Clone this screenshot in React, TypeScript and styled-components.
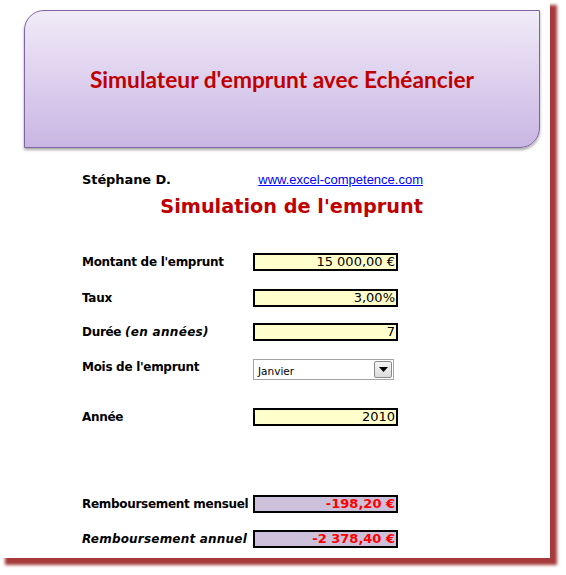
import { FC } from 'react';
import styled, { createGlobalStyle } from 'styled-components';

const GlobalStyle = createGlobalStyle`
  html, body {
    margin: 0;
    padding: 0;
    background: #ffffff;
  }
`;

interface IField {
  label: string;
  italic?: string;
  italicLabel?: boolean;
  value: string;
  kind: 'input' | 'select' | 'result';
  gap: number;
}

const fields: IField[] = [
  { label: "Montant de l'emprunt", value: '15 000,00 €', kind: 'input', gap: 35 },
  { label: 'Taux', value: '3,00%', kind: 'input', gap: 18 },
  { label: 'Durée ', italic: '(en années)', value: '7', kind: 'input', gap: 16 },
  { label: "Mois de l'emprunt", value: 'Janvier', kind: 'select', gap: 18 },
  { label: 'Année', value: '2010', kind: 'input', gap: 28 },
  { label: 'Remboursement mensuel', value: '-198,20 €', kind: 'result', gap: 69 },
  {
    label: 'Remboursement annuel',
    italicLabel: true,
    value: '-2 378,40 €',
    kind: 'result',
    gap: 17
  }
];

const App: FC = () => {
  return (
    <>
      <GlobalStyle />
      <Page>
        <Sheet>
          <Banner>
            <BannerTitle>Simulateur d'emprunt avec Echéancier</BannerTitle>
          </Banner>

          <Content>
            <InfoRow>
              <Author>Stéphane D.</Author>
              <SiteLink href="#">www.excel-competence.com</SiteLink>
            </InfoRow>
            <Heading>Simulation de l'emprunt</Heading>

            {fields.map((field) => (
              <FieldRow key={field.label} $gap={field.gap}>
                <Label $italic={field.italicLabel} $top={field.kind === 'select'}>
                  {field.label}
                  {field.italic && <em>{field.italic}</em>}
                </Label>
                {field.kind === 'select' ? (
                  <Select>
                    <SelectText>{field.value}</SelectText>
                    <DropButton>
                      <svg width="9" height="5" viewBox="0 0 9 5">
                        <path d="M0 0 L9 0 L4.5 5 Z" fill="#000" />
                      </svg>
                    </DropButton>
                  </Select>
                ) : (
                  <Cell $result={field.kind === 'result'}>{field.value}</Cell>
                )}
              </FieldRow>
            ))}
          </Content>
        </Sheet>
      </Page>
    </>
  );
};

const Page = styled.div`
  width: 566px;
  height: 575px;
  overflow: hidden;
`;

const Sheet = styled.div`
  width: 550px;
  height: 558px;
  background: #ffffff;
  box-shadow: 6px 6px 3px 1px #a63a3a;
  box-sizing: border-box;
  padding-top: 10px;
  overflow: hidden;
`;

const Banner = styled.div`
  margin-left: 24px;
  width: 516px;
  height: 138px;
  box-sizing: border-box;
  border: 1px solid #8064a2;
  border-radius: 20px 0 20px 0;
  background: linear-gradient(180deg, #f1ebf8 0%, #ddd0ee 50%, #c9b6e3 100%);
  box-shadow: 0 2px 3px rgba(0, 0, 0, 0.35);
  display: flex;
  align-items: center;
  justify-content: center;
`;

const BannerTitle = styled.h1`
  margin: 0;
  font-family: Lato, 'Noto Sans', sans-serif;
  font-weight: 700;
  font-size: 22.7px;
  color: #c00000;
`;

const Content = styled.div`
  margin-left: 82px;
  width: 341px;
  font-family: 'DejaVu Sans', Verdana, sans-serif;
`;

const InfoRow = styled.div`
  margin-top: 23px;
  display: flex;
  justify-content: space-between;
  align-items: center;
  height: 16px;
`;

const Author = styled.span`
  font-weight: 700;
  font-size: 13px;
  letter-spacing: -0.1px;
  color: #000;
`;

const SiteLink = styled.a`
  font-family: 'Liberation Sans', Arial, sans-serif;
  font-size: 13px;
  color: #0000ff;
  text-decoration: underline;
`;

const Heading = styled.h2`
  margin: 9px 0 0;
  text-align: right;
  font-weight: 700;
  font-size: 19.3px;
  line-height: 22px;
  color: #c00000;
`;

const FieldRow = styled.div<{ $gap: number }>`
  margin-top: ${(p) => p.$gap}px;
  display: grid;
  grid-template-columns: 171px 145px;
  align-items: center;
`;

const Label = styled.div<{ $italic?: boolean; $top?: boolean }>`
  font-weight: 700;
  font-size: 12px;
  line-height: 16px;
  letter-spacing: ${(p) => (p.$italic ? '0.2px' : '-0.3px')};
  color: #000;
  white-space: nowrap;
  font-style: ${(p) => (p.$italic ? 'italic' : 'normal')};
  align-self: ${(p) => (p.$top ? 'start' : 'center')};

  em {
    font-style: italic;
    letter-spacing: 0.3px;
  }
`;

const Cell = styled.div<{ $result?: boolean }>`
  height: 18px;
  box-sizing: border-box;
  border: 2px solid #000;
  background: ${(p) => (p.$result ? '#ccc0da' : '#ffffcc')};
  color: ${(p) => (p.$result ? '#ff0000' : '#000')};
  font-weight: ${(p) => (p.$result ? 700 : 400)};
  font-size: 13px;
  line-height: 14px;
  text-align: right;
  padding-right: 1px;
`;

const Select = styled.div`
  width: 141px;
  height: 21px;
  box-sizing: border-box;
  border: 1px solid #a5a5a5;
  background: #fff;
  display: flex;
  align-items: center;
  justify-content: space-between;
  padding: 0 1px 0 4px;
`;

const SelectText = styled.span`
  font-size: 10.5px;
  color: #000;
  padding-top: 2px;
`;

const DropButton = styled.div`
  width: 18px;
  height: 17px;
  box-sizing: border-box;
  border: 1px solid #8a8a8a;
  border-radius: 2px;
  background: linear-gradient(180deg, #f4f4f4 0%, #dcdcdc 100%);
  display: flex;
  align-items: center;
  justify-content: center;
`;

export default App;
